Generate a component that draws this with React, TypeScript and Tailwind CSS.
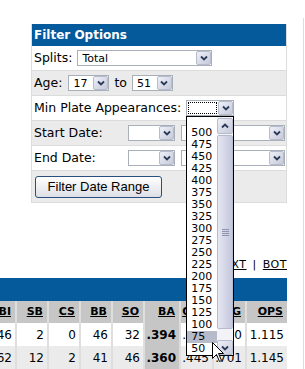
import type { ReactNode } from "react";

const COLS = [
  { key: "RBI", w: "w-[17px]" },
  { key: "SB", w: "w-[32px]" },
  { key: "CS", w: "w-[32px]" },
  { key: "BB", w: "w-[32px]" },
  { key: "SO", w: "w-[32px]" },
  { key: "BA", w: "w-[36px]" },
  { key: "OBP", w: "w-[33px]" },
  { key: "SLG", w: "w-[33px]" },
  { key: "OPS", w: "w-[40px]" },
];

const ROWS = [
  ["46", "2", "0", "46", "32", ".394", ".468", ".720", "1.115"],
  ["62", "12", "2", "41", "46", ".360", ".445", ".701", "1.145"],
];

const PA_OPTIONS = [
  "500", "475", "450", "425", "400", "375", "350", "325", "300", "275",
  "250", "225", "200", "175", "150", "125", "100", "75", "50",
];

function Chevron({ up = false }: { up?: boolean }) {
  return (
    <svg width="8" height="6" viewBox="0 0 8 6">
      <path
        d={up ? "M1 4.5 L4 1.5 L7 4.5" : "M1 1.5 L4 4.5 L7 1.5"}
        fill="none"
        stroke="#2b3a5a"
        strokeWidth="1.8"
      />
    </svg>
  );
}

function ArrowBox({ up = false, className = "" }: { up?: boolean; className?: string }) {
  return (
    <div
      className={`flex items-center justify-center rounded-[2px] border border-[#b6bccd] bg-gradient-to-br from-[#eef0f8] to-[#c6cad9] ${className}`}
    >
      <Chevron up={up} />
    </div>
  );
}

function Select({
  value = "",
  width,
  focused = false,
  children,
}: {
  value?: string;
  width: string;
  focused?: boolean;
  children?: ReactNode;
}) {
  return (
    <div className={`relative flex h-[16px] ${width} border border-[#a9b0ba] bg-white`}>
      <div className="flex flex-1 items-center p-px">
        <div
          className={`flex h-full flex-1 items-center pl-[3px] text-[11px] leading-none text-black ${
            focused ? "border border-dotted border-black" : ""
          }`}
        >
          {value}
        </div>
      </div>
      <ArrowBox className="h-full w-[15px]" />
      {children}
    </div>
  );
}

function PaList() {
  return (
    <div className="absolute left-[-1px] top-[15px] z-10 flex h-[240px] w-[48px] border border-black bg-white">
      <div className="flex flex-1 flex-col text-[11px] leading-[12px] text-black">
        <div className="h-[10px]" />
        {PA_OPTIONS.map((o) => (
          <div key={o} className={`h-[12px] pl-[4px] ${o === "75" ? "bg-[#b7bac8]" : ""}`}>
            {o}
          </div>
        ))}
      </div>
      <div className="flex w-[16px] flex-col bg-[#f3f3f7] pt-px">
        <ArrowBox up className="h-[16px] w-[16px]" />
        <div className="mt-px flex h-[194px] w-[16px] items-center justify-center rounded-[2px] border border-[#b6bccd] bg-gradient-to-r from-[#e6e7f3] to-[#c4c7dc]">
          <div className="flex flex-col gap-px">
            <div className="h-px w-[7px] bg-[#8c93ad]" />
            <div className="h-px w-[7px] bg-[#8c93ad]" />
            <div className="h-px w-[7px] bg-[#8c93ad]" />
            <div className="h-px w-[7px] bg-[#8c93ad]" />
          </div>
        </div>
        <div className="flex-1" />
        <ArrowBox className="h-[15px] w-[16px]" />
      </div>
    </div>
  );
}

function Row({ gray = false, children }: { gray?: boolean; children: ReactNode }) {
  return (
    <div
      className={`flex h-[25px] items-center border-b border-[#dcdcdc] pl-[2px] ${
        gray ? "bg-[#ebebeb]" : "bg-white"
      }`}
    >
      {children}
    </div>
  );
}

export default function App() {
  return (
    <div className="relative h-[369px] w-[305px] overflow-hidden bg-white font-['DejaVu_Sans',sans-serif] text-black">
      <div className="mt-[18px] h-[351px] w-[304px] border-r border-[#dcdcdc] pt-[6px]">
        <section className="ml-[31px] w-[256px] border-x border-b border-[#dcdcdc] text-[12.5px]">
          <header className="flex h-[22px] items-center bg-[#045a9b] pl-[2px] text-[12px] font-bold text-white">
            Filter Options
          </header>

          <Row>
            <span>Splits:</span>
            <div className="ml-[5px]">
              <Select value="Total" width="w-[135px]" />
            </div>
          </Row>

          <Row gray>
            <span>Age:</span>
            <div className="ml-[6px]">
              <Select value="17" width="w-[41px]" />
            </div>
            <span className="ml-[5px]">to</span>
            <div className="ml-[5px]">
              <Select value="51" width="w-[41px]" />
            </div>
          </Row>

          <Row>
            <span>Min Plate Appearances:</span>
            <div className="ml-[5px]">
              <Select focused width="w-[48px]">
                <PaList />
              </Select>
            </div>
          </Row>

          <Row gray>
            <span className="w-[94px]">Start Date:</span>
            <Select width="w-[47px]" />
            <div className="ml-[6px]">
              <Select width="w-[104px]" />
            </div>
          </Row>

          <Row>
            <span className="w-[94px]">End Date:</span>
            <Select width="w-[47px]" />
            <div className="ml-[6px]">
              <Select width="w-[104px]" />
            </div>
          </Row>

          <div className="flex h-[31px] items-start bg-[#ebebeb] pl-[3px] pt-[5px]">
            <button className="h-[22px] w-[127px] rounded-[3px] border border-[#2a4f7e] bg-gradient-to-b from-white to-[#dedfe6] font-['Liberation_Sans',sans-serif] text-[13px] text-black">
              Filter Date Range
            </button>
          </div>
        </section>

        <div className="mt-[54px] flex h-[21px] w-[287px] items-start justify-end text-[11px] tracking-[0.5px]">
          <span className="underline">NEXT</span>
          <span className="mx-[6px]">|</span>
          <span className="underline">BOT</span>
        </div>

        <div className="w-[287px]">
          <div className="h-[23px] bg-[#045a9b]" />
          <div className="flex h-[22px] bg-[#c6c6c6]">
            {COLS.map((c, i) => (
              <div
                key={c.key}
                className={`flex ${c.w} items-center justify-end overflow-hidden pr-[4px] text-[11px] font-bold underline ${
                  i < COLS.length - 1 ? "border-r-2 border-[#dedede]" : ""
                }`}
              >
                {c.key}
              </div>
            ))}
          </div>
          {ROWS.map((r, ri) => (
            <div key={ri} className={`flex h-[23px] ${ri === 1 ? "bg-[#ebebeb]" : "bg-white"}`}>
              {r.map((v, i) => (
                <div
                  key={i}
                  className={`flex ${COLS[i].w} items-center justify-end overflow-hidden pr-[3px] text-[12px] ${
                    i === 5 ? "bg-[#c6c6c6] font-bold" : ""
                  } ${i < r.length - 1 ? "border-r-2 border-[#dedede]" : ""}`}
                >
                  {v}
                </div>
              ))}
            </div>
          ))}
        </div>
      </div>

      <svg
        className="absolute left-[212px] top-[342px] z-20"
        width="13"
        height="21"
        viewBox="0 0 13 21"
      >
        <path
          d="M0.5 0.5 L0.5 16.5 L4.5 12.5 L7.5 19.5 L9.5 18.5 L6.5 11.5 L11.5 11.5 Z"
          fill="white"
          stroke="black"
          strokeWidth="1"
        />
      </svg>
    </div>
  );
}
